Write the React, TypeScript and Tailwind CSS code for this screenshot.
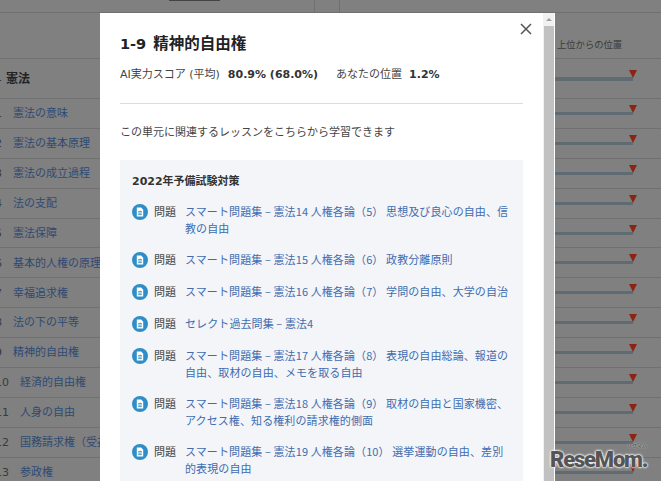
const rows = [
  { n: '1', label: '憲法の意味' },
  { n: '2', label: '憲法の基本原理' },
  { n: '3', label: '憲法の成立過程' },
  { n: '4', label: '法の支配' },
  { n: '5', label: '憲法保障' },
  { n: '6', label: '基本的人権の原理' },
  { n: '7', label: '幸福追求権' },
  { n: '8', label: '法の下の平等' },
  { n: '9', label: '精神的自由権' },
  { n: '10', label: '経済的自由権' },
  { n: '11', label: '人身の自由' },
  { n: '12', label: '国務請求権（受益権）' },
  { n: '13', label: '参政権' },
];

const lessons = [
  'スマート問題集 – 憲法14 人権各論（5） 思想及び良心の自由、信教の自由',
  'スマート問題集 – 憲法15 人権各論（6） 政教分離原則',
  'スマート問題集 – 憲法16 人権各論（7） 学問の自由、大学の自治',
  'セレクト過去問集 – 憲法4',
  'スマート問題集 – 憲法17 人権各論（8） 表現の自由総論、報道の自由、取材の自由、メモを取る自由',
  'スマート問題集 – 憲法18 人権各論（9） 取材の自由と国家機密、アクセス権、知る権利の請求権的側面',
  'スマート問題集 – 憲法19 人権各論（10） 選挙運動の自由、差別的表現の自由',
];

function DocIcon() {
  return (
    <svg width="16" height="16" viewBox="0 0 16 16" className="shrink-0 mt-[1px]">
      <circle cx="8" cy="8" r="8" fill="#2f8fc4" />
      <path d="M4.8 3.6h4.3l2.1 2.2v6.6H4.8z" fill="#fff" />
      <path d="M6.2 7.4h3.6M6.2 9h3.6M6.2 10.6h3.6" stroke="#2f8fc4" strokeWidth="0.9" />
    </svg>
  );
}

function Marker({ bar, tri }: { bar: string; tri: string }) {
  return (
    <>
      <div className={`absolute left-[555px] w-[78px] h-[3px] bg-[#5f6b73] ${bar}`} />
      <div className={`absolute left-[629px] w-0 h-0 border-l-[4px] border-r-[4px] border-t-[8px] border-l-transparent border-r-transparent border-t-[#8c2413] ${tri}`} />
    </>
  );
}

export default function App() {
  return (
    <div className="relative w-[661px] h-[481px] overflow-hidden bg-[#808080] font-['DejaVu_Sans','Noto_Sans_CJK_JP',sans-serif]">
      {/* page behind the dialog */}
      <div className="h-[13px] border-b border-[#707070] flex">
        <div className="w-[315px] border-r border-[#707070]">
          <div className="ml-[169px] w-[51px] h-[1px] bg-[#444]" />
        </div>
        <div className="w-[25px] border-r border-[#707070]" />
      </div>
      <div className="h-[46px] border-b border-[#707070] flex items-end pb-[7px] pl-[557px]">
        <span className="text-[9.3px] leading-[12px] text-[#3a3a3a]">上位からの位置</span>
      </div>
      <div className="relative h-[40px] border-b border-[#707070] flex items-center">
        <span className="-ml-[5px] w-[11px] text-[11px] text-[#333]">1</span>
        <span className="text-[12px] font-bold text-[#222]">憲法</span>
        <Marker bar="top-[18px] h-[4px]" tri="top-[11px]" />
      </div>
      {rows.map((r) => (
        <div key={r.n} className="relative h-[29.9px] pt-[2px] border-b border-[#707070] flex items-center text-[11px]">
          <span className={`-ml-[5px] shrink-0 text-[#3a3a3a] ${r.n.length > 1 ? 'w-[25px]' : 'w-[18px]'}`}>{r.n}</span>
          <span className="whitespace-nowrap text-[#2f4a72]">{r.label}</span>
          <Marker bar="top-[13px]" tri="top-[6px]" />
        </div>
      ))}

      {/* dialog */}
      <div className="absolute left-[100px] top-[13px] w-[443px] h-[480px] bg-white px-[20px] pt-[20px]">
        <svg width="12" height="12" viewBox="0 0 12 12" className="absolute right-[11px] top-[10px]">
          <path d="M1 1l10 10M11 1L1 11" stroke="#555" strokeWidth="1.5" />
        </svg>
        <h2 className="leading-[22px] font-bold text-[#222] whitespace-nowrap">
          <span className="text-[14.5px]">1-9</span>
          <span className="ml-[7px] text-[15.5px]">精神的自由権</span>
        </h2>
        <p className="mt-[11px] text-[11px] leading-[18px] text-[#444] whitespace-nowrap">
          AI実力スコア (平均)
          <b className="ml-[8px] text-[#333]">80.9% (68.0%)</b>
          <span className="ml-[18px]">あなたの位置</span>
          <b className="ml-[7px] text-[#333]">1.2%</b>
        </p>
        <div className="mt-[19px] border-t border-[#dcdcdc]" />
        <p className="mt-[21px] text-[11px] leading-[16px] text-[#444]">この単元に関連するレッスンをこちらから学習できます</p>
        <div className="mt-[19px] bg-[#f3f5f8] px-[12px] pt-[14px] h-[330px]">
          <h3 className="text-[11px] leading-[16px] font-bold text-[#333]">2022年予備試験対策</h3>
          <ul className="mt-[13px] flex flex-col gap-[15px] font-['Noto_Sans_CJK_JP',sans-serif]">
            {lessons.map((title) => (
              <li key={title} className="flex items-start min-h-[17px]">
                <DocIcon />
                <span className="ml-[6px] w-[31px] shrink-0 text-[11px] leading-[16.5px] text-[#444]">問題</span>
                <a className="text-[11px] leading-[16.5px] tracking-[0.1px] text-[#3f6cb0]">{title}</a>
              </li>
            ))}
          </ul>
        </div>
      </div>

      {/* dialog scrollbar */}
      <div className="absolute left-[543px] top-[13px] w-[12px] h-[468px] flex pl-[1px] border-r border-white bg-[#f1f1f1]">
        <div className="w-full flex flex-col">
          <div className="h-[13px] flex items-center justify-center">
            <div className="w-0 h-0 border-l-[3px] border-r-[3px] border-b-[3px] border-l-transparent border-r-transparent border-b-[#a0a0a0]" />
          </div>
          <div className="flex-1 bg-[#c1c1c1]" />
        </div>
      </div>

      {/* watermark */}
      <div className="absolute left-[550px] top-[450px] text-[22px] leading-[19px] font-black tracking-[-1.2px] text-[#555] font-['Roboto',sans-serif] [text-shadow:0_0_2px_#fff,0_0_2px_#fff,0_0_3px_#fff]">
        ReseMom.
      </div>
      <div className="absolute left-[627px] top-[442px] text-[5px] leading-[7px] text-[#444] [text-shadow:0_0_2px_#fff]">リセマム</div>
    </div>
  );
}
